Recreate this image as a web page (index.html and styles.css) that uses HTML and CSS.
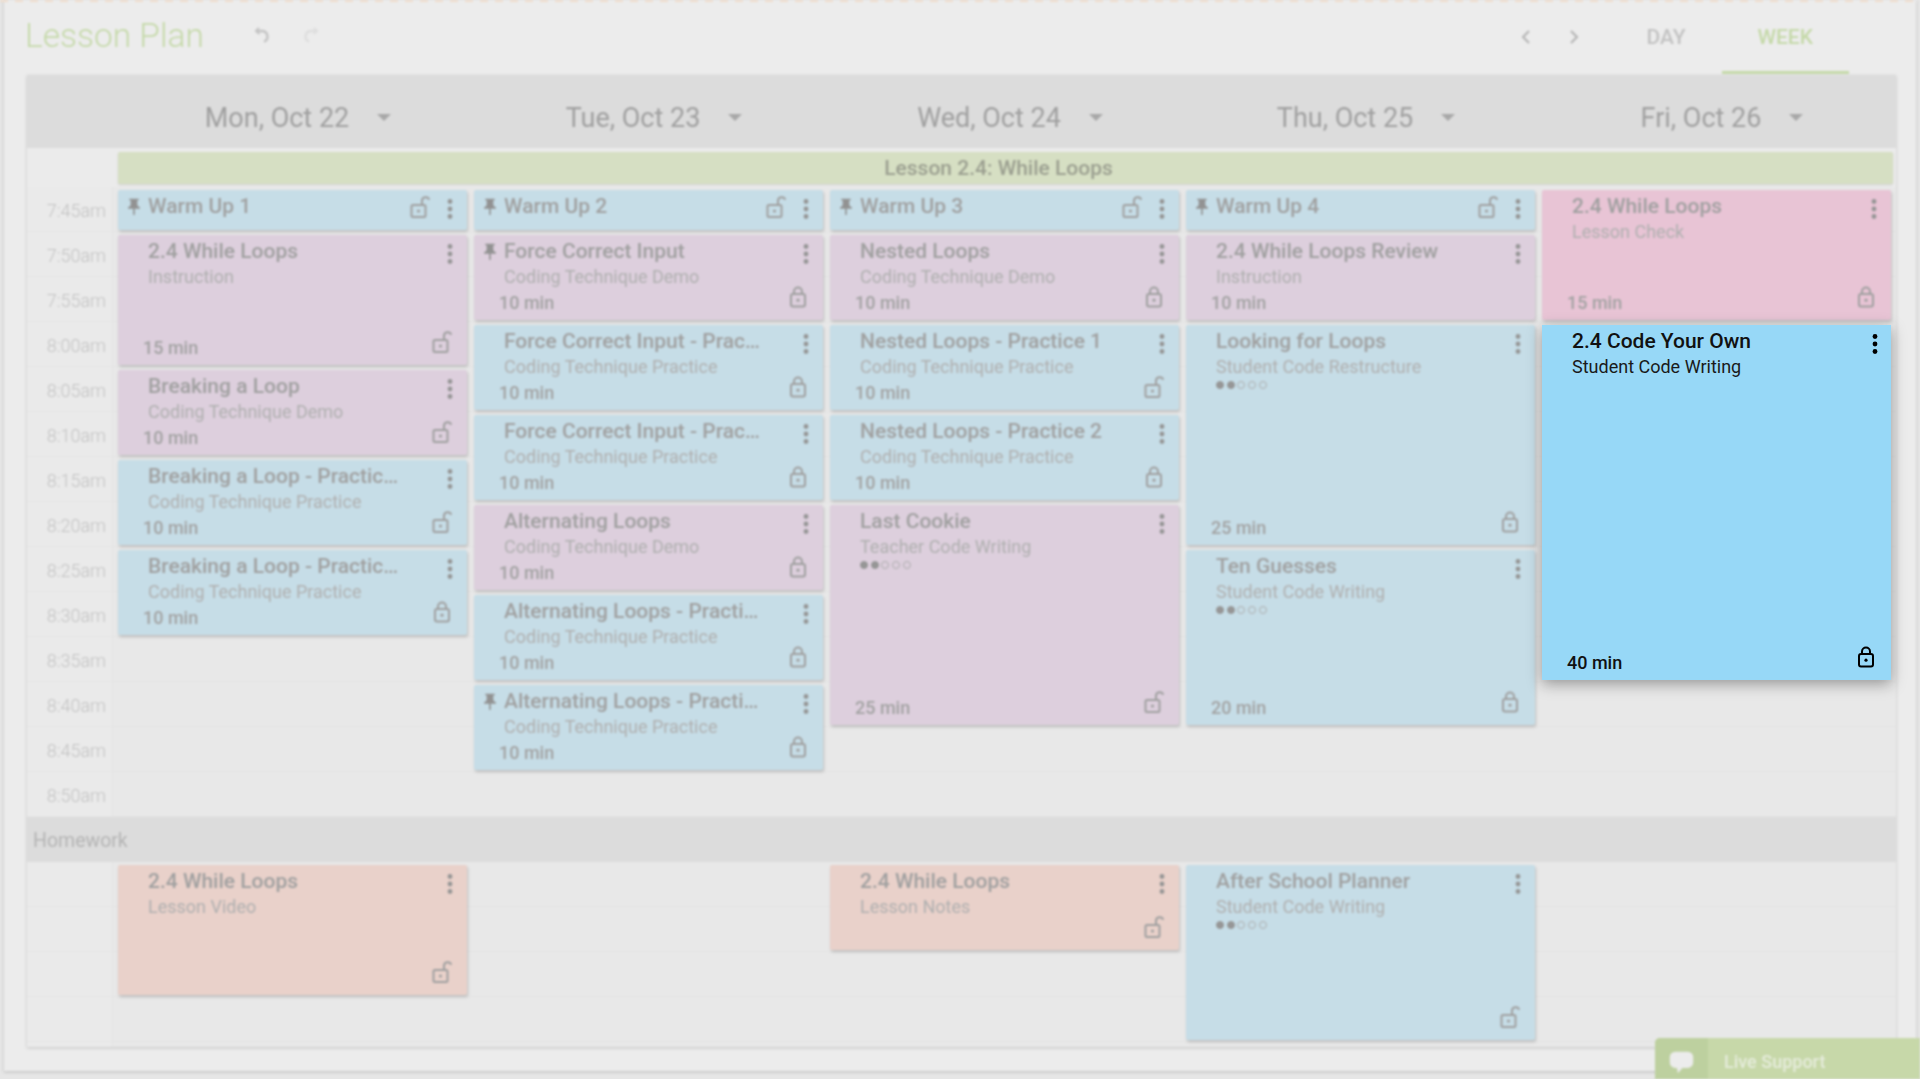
FILE: index.html
```html
<!DOCTYPE html>
<html lang="en">
<head>
  <meta charset="UTF-8">
  <title>Lesson Plan</title>
  <link rel="stylesheet" href="styles.css">
</head>
<body>
  <svg class="sprite" width="0" height="0">
    <symbol id="i-more" viewBox="0 0 24 24"><circle cx="12" cy="4.5" r="2.4"/><circle cx="12" cy="12" r="2.4"/><circle cx="12" cy="19.5" r="2.4"/></symbol>
    <symbol id="i-lock" viewBox="0 0 24 24"><path d="M8 9V6.5a4 4 0 0 1 8 0V9" fill="none" stroke="currentColor" stroke-width="2"/><rect x="5" y="9" width="14" height="12.5" rx="2" fill="none" stroke="currentColor" stroke-width="2"/><circle cx="12" cy="15.2" r="1.6"/></symbol>
    <symbol id="i-open" viewBox="0 0 24 24"><path d="M14 10V6a3.7 3.7 0 0 1 7.2-1.2" fill="none" stroke="currentColor" stroke-width="2"/><rect x="3.5" y="10" width="14" height="12" rx="1.5" fill="none" stroke="currentColor" stroke-width="2"/><circle cx="10.5" cy="16" r="1.6"/></symbol>
    <symbol id="i-pin" viewBox="0 0 24 24"><path d="M16 9V4h1c.55 0 1-.45 1-1s-.45-1-1-1H7c-.55 0-1 .45-1 1s.45 1 1 1h1v5c0 1.66-1.34 3-3 3v2h5.97v7l1 1 1-1v-7H19v-2c-1.66 0-3-1.34-3-3z"/></symbol>
    <symbol id="i-caret" viewBox="0 0 14 7"><path d="M0 0h14L7 7z"/></symbol>
  </svg>

  <div class="backdrop">
    <div class="top-strip"></div>
    <div class="panel">
      <div class="topbar">
        <h1 class="page-title">Lesson Plan</h1>
        <svg class="hist undo" viewBox="0 0 24 24"><path d="M8 5 5 8l3.5 3" fill="none" stroke="currentColor" stroke-width="2"/><path d="M5 8h6a5.5 5.5 0 0 1 2 10.6" fill="none" stroke="currentColor" stroke-width="2.4"/></svg>
        <svg class="hist redo" viewBox="0 0 24 24"><path d="M16 5l3 3-3.5 3" fill="none" stroke="currentColor" stroke-width="2"/><path d="M19 8h-6a5.5 5.5 0 0 0-2 10.6" fill="none" stroke="currentColor" stroke-width="2.4"/></svg>
        <div class="week-nav">
          <svg class="chev" viewBox="0 0 24 24"><path d="M15 6l-6 6 6 6" fill="none" stroke="currentColor" stroke-width="2"/></svg>
          <svg class="chev" viewBox="0 0 24 24"><path d="M9 6l6 6-6 6" fill="none" stroke="currentColor" stroke-width="2"/></svg>
        </div>
        <div class="tabs">
          <div class="tab">DAY</div>
          <div class="tab active">WEEK</div>
        </div>
      </div>

      <div class="planner">
        <div class="day-header">
          <div class="day-spacer"></div>
          <div class="day-name">Mon, Oct 22<svg class="caret"><use href="#i-caret"/></svg></div>
          <div class="day-name">Tue, Oct 23<svg class="caret"><use href="#i-caret"/></svg></div>
          <div class="day-name">Wed, Oct 24<svg class="caret"><use href="#i-caret"/></svg></div>
          <div class="day-name">Thu, Oct 25<svg class="caret"><use href="#i-caret"/></svg></div>
          <div class="day-name">Fri, Oct 26<svg class="caret"><use href="#i-caret"/></svg></div>
        </div>

        <div class="lesson-row">
          <div class="lesson-band">Lesson 2.4: While Loops</div>
        </div>

        <div class="rows schedule">
          <div class="times">
            <div class="time">7:45am</div>
            <div class="time">7:50am</div>
            <div class="time">7:55am</div>
            <div class="time">8:00am</div>
            <div class="time">8:05am</div>
            <div class="time">8:10am</div>
            <div class="time">8:15am</div>
            <div class="time">8:20am</div>
            <div class="time">8:25am</div>
            <div class="time">8:30am</div>
            <div class="time">8:35am</div>
            <div class="time">8:40am</div>
            <div class="time">8:45am</div>
            <div class="time">8:50am</div>
          </div>

          <!-- Monday -->
          <div class="day">
            <div class="card blue span-1">
              <div class="card-head"><svg class="pin"><use href="#i-pin"/></svg><div class="card-title">Warm Up 1</div><svg class="lock-inline"><use href="#i-open"/></svg><svg class="more"><use href="#i-more"/></svg></div>
            </div>
            <div class="card mauve span-3">
              <div class="card-head"><div class="card-title">2.4 While Loops</div><svg class="more"><use href="#i-more"/></svg></div>
              <div class="card-type">Instruction</div>
              <div class="card-foot"><span>15 min</span><svg class="lock"><use href="#i-open"/></svg></div>
            </div>
            <div class="card mauve span-2">
              <div class="card-head"><div class="card-title">Breaking a Loop</div><svg class="more"><use href="#i-more"/></svg></div>
              <div class="card-type">Coding Technique Demo</div>
              <div class="card-foot"><span>10 min</span><svg class="lock"><use href="#i-open"/></svg></div>
            </div>
            <div class="card blue span-2">
              <div class="card-head"><div class="card-title">Breaking a Loop - Practice 1</div><svg class="more"><use href="#i-more"/></svg></div>
              <div class="card-type">Coding Technique Practice</div>
              <div class="card-foot"><span>10 min</span><svg class="lock"><use href="#i-open"/></svg></div>
            </div>
            <div class="card blue span-2">
              <div class="card-head"><div class="card-title">Breaking a Loop - Practice 2</div><svg class="more"><use href="#i-more"/></svg></div>
              <div class="card-type">Coding Technique Practice</div>
              <div class="card-foot"><span>10 min</span><svg class="lock"><use href="#i-lock"/></svg></div>
            </div>
          </div>

          <!-- Tuesday -->
          <div class="day">
            <div class="card blue span-1">
              <div class="card-head"><svg class="pin"><use href="#i-pin"/></svg><div class="card-title">Warm Up 2</div><svg class="lock-inline"><use href="#i-open"/></svg><svg class="more"><use href="#i-more"/></svg></div>
            </div>
            <div class="card mauve span-2">
              <div class="card-head"><svg class="pin"><use href="#i-pin"/></svg><div class="card-title">Force Correct Input</div><svg class="more"><use href="#i-more"/></svg></div>
              <div class="card-type">Coding Technique Demo</div>
              <div class="card-foot"><span>10 min</span><svg class="lock"><use href="#i-lock"/></svg></div>
            </div>
            <div class="card blue span-2">
              <div class="card-head"><div class="card-title">Force Correct Input - Practice 1</div><svg class="more"><use href="#i-more"/></svg></div>
              <div class="card-type">Coding Technique Practice</div>
              <div class="card-foot"><span>10 min</span><svg class="lock"><use href="#i-lock"/></svg></div>
            </div>
            <div class="card blue span-2">
              <div class="card-head"><div class="card-title">Force Correct Input - Practice 2</div><svg class="more"><use href="#i-more"/></svg></div>
              <div class="card-type">Coding Technique Practice</div>
              <div class="card-foot"><span>10 min</span><svg class="lock"><use href="#i-lock"/></svg></div>
            </div>
            <div class="card mauve span-2">
              <div class="card-head"><div class="card-title">Alternating Loops</div><svg class="more"><use href="#i-more"/></svg></div>
              <div class="card-type">Coding Technique Demo</div>
              <div class="card-foot"><span>10 min</span><svg class="lock"><use href="#i-lock"/></svg></div>
            </div>
            <div class="card blue span-2">
              <div class="card-head"><div class="card-title">Alternating Loops - Practice 1</div><svg class="more"><use href="#i-more"/></svg></div>
              <div class="card-type">Coding Technique Practice</div>
              <div class="card-foot"><span>10 min</span><svg class="lock"><use href="#i-lock"/></svg></div>
            </div>
            <div class="card blue span-2">
              <div class="card-head"><svg class="pin"><use href="#i-pin"/></svg><div class="card-title">Alternating Loops - Practice 2</div><svg class="more"><use href="#i-more"/></svg></div>
              <div class="card-type">Coding Technique Practice</div>
              <div class="card-foot"><span>10 min</span><svg class="lock"><use href="#i-lock"/></svg></div>
            </div>
          </div>

          <!-- Wednesday -->
          <div class="day">
            <div class="card blue span-1">
              <div class="card-head"><svg class="pin"><use href="#i-pin"/></svg><div class="card-title">Warm Up 3</div><svg class="lock-inline"><use href="#i-open"/></svg><svg class="more"><use href="#i-more"/></svg></div>
            </div>
            <div class="card mauve span-2">
              <div class="card-head"><div class="card-title">Nested Loops</div><svg class="more"><use href="#i-more"/></svg></div>
              <div class="card-type">Coding Technique Demo</div>
              <div class="card-foot"><span>10 min</span><svg class="lock"><use href="#i-lock"/></svg></div>
            </div>
            <div class="card blue span-2">
              <div class="card-head"><div class="card-title">Nested Loops - Practice 1</div><svg class="more"><use href="#i-more"/></svg></div>
              <div class="card-type">Coding Technique Practice</div>
              <div class="card-foot"><span>10 min</span><svg class="lock"><use href="#i-open"/></svg></div>
            </div>
            <div class="card blue span-2">
              <div class="card-head"><div class="card-title">Nested Loops - Practice 2</div><svg class="more"><use href="#i-more"/></svg></div>
              <div class="card-type">Coding Technique Practice</div>
              <div class="card-foot"><span>10 min</span><svg class="lock"><use href="#i-lock"/></svg></div>
            </div>
            <div class="card mauve span-5">
              <div class="card-head"><div class="card-title">Last Cookie</div><svg class="more"><use href="#i-more"/></svg></div>
              <div class="card-type">Teacher Code Writing</div>
              <div class="dots"><span class="on"></span><span class="on"></span><span></span><span></span><span></span></div>
              <div class="card-foot"><span>25 min</span><svg class="lock"><use href="#i-open"/></svg></div>
            </div>
          </div>

          <!-- Thursday -->
          <div class="day">
            <div class="card blue span-1">
              <div class="card-head"><svg class="pin"><use href="#i-pin"/></svg><div class="card-title">Warm Up 4</div><svg class="lock-inline"><use href="#i-open"/></svg><svg class="more"><use href="#i-more"/></svg></div>
            </div>
            <div class="card mauve span-2">
              <div class="card-head"><div class="card-title">2.4 While Loops Review</div><svg class="more"><use href="#i-more"/></svg></div>
              <div class="card-type">Instruction</div>
              <div class="card-foot"><span>10 min</span></div>
            </div>
            <div class="card blue span-5">
              <div class="card-head"><div class="card-title">Looking for Loops</div><svg class="more"><use href="#i-more"/></svg></div>
              <div class="card-type">Student Code Restructure</div>
              <div class="dots"><span class="on"></span><span class="on"></span><span></span><span></span><span></span></div>
              <div class="card-foot"><span>25 min</span><svg class="lock"><use href="#i-lock"/></svg></div>
            </div>
            <div class="card blue span-4">
              <div class="card-head"><div class="card-title">Ten Guesses</div><svg class="more"><use href="#i-more"/></svg></div>
              <div class="card-type">Student Code Writing</div>
              <div class="dots"><span class="on"></span><span class="on"></span><span></span><span></span><span></span></div>
              <div class="card-foot"><span>20 min</span><svg class="lock"><use href="#i-lock"/></svg></div>
            </div>
          </div>

          <!-- Friday -->
          <div class="day">
            <div class="card pink span-3">
              <div class="card-head"><div class="card-title">2.4 While Loops</div><svg class="more"><use href="#i-more"/></svg></div>
              <div class="card-type">Lesson Check</div>
              <div class="card-foot"><span>15 min</span><svg class="lock"><use href="#i-lock"/></svg></div>
            </div>
          </div>
        </div>

        <div class="section-band">Homework</div>

        <div class="rows homework">
          <div class="times"></div>
          <div class="day">
            <div class="card salmon span-3">
              <div class="card-head"><div class="card-title">2.4 While Loops</div><svg class="more"><use href="#i-more"/></svg></div>
              <div class="card-type">Lesson Video</div>
              <div class="card-foot"><span></span><svg class="lock"><use href="#i-open"/></svg></div>
            </div>
          </div>
          <div class="day"></div>
          <div class="day">
            <div class="card salmon span-2">
              <div class="card-head"><div class="card-title">2.4 While Loops</div><svg class="more"><use href="#i-more"/></svg></div>
              <div class="card-type">Lesson Notes</div>
              <div class="card-foot"><span></span><svg class="lock"><use href="#i-open"/></svg></div>
            </div>
          </div>
          <div class="day">
            <div class="card blue span-4">
              <div class="card-head"><div class="card-title">After School Planner</div><svg class="more"><use href="#i-more"/></svg></div>
              <div class="card-type">Student Code Writing</div>
              <div class="dots"><span class="on"></span><span class="on"></span><span></span><span></span><span></span></div>
              <div class="card-foot"><span></span><svg class="lock"><use href="#i-open"/></svg></div>
            </div>
          </div>
          <div class="day"></div>
        </div>
      </div>
    </div>

    <div class="live-support">
      <div class="live-icon">
        <svg viewBox="0 0 30 30"><path d="M8 3h14a6 6 0 0 1 6 6v6a6 6 0 0 1-6 6h-6l-5 6-1-6H8a6 6 0 0 1-6-6V9a6 6 0 0 1 6-6z"/></svg>
      </div>
      <div class="live-text">Live Support</div>
    </div>
  </div>

  <!-- the card being dragged sits sharp above the blurred page -->
  <div class="card-lifted">
    <div class="card-head"><div class="card-title">2.4 Code Your Own</div><svg class="more"><use href="#i-more"/></svg></div>
    <div class="card-type">Student Code Writing</div>
    <div class="card-foot"><span>40 min</span><svg class="lock"><use href="#i-lock"/></svg></div>
  </div>
</body>
</html>
```

FILE: styles.css
```css
/* General Styles */
* {
  box-sizing: border-box;
}

body {
  margin: 0;
  height: 1079px;
  overflow: hidden;
  position: relative;
  background: #e6e6e6;
  font-family: Roboto, "Liberation Sans", sans-serif;
  color: #9e9e9e;
}

.sprite {
  position: absolute;
}

.backdrop {
  height: 1079px;
  filter: blur(1.3px);
}

.top-strip {
  position: absolute;
  left: 0;
  right: 0;
  top: 0;
  height: 2px;
  z-index: 1;
  background: repeating-linear-gradient(90deg, #f0dccb 0, #f0dccb 8px, transparent 8px, transparent 15px);
}

.panel {
  height: 1071px;
  margin: 0 4px;
  padding: 0 20px 0 23px;
  background: #ececec;
  box-shadow: 0 1px 3px rgba(0, 0, 0, 0.2);
}

/* Top bar */
.topbar {
  display: flex;
  align-items: center;
  height: 75px;
  padding-right: 47px;
}

.page-title {
  margin: 0 47px 5px -2px;
  font-size: 33.5px;
  font-weight: 300;
  color: #c5d9a9;
}

.hist {
  width: 24px;
  height: 24px;
  margin: 0 23px 5px 0;
}

.undo {
  color: #c4c4c4;
}

.redo {
  color: #dedede;
}

.week-nav {
  display: flex;
  gap: 24px;
  margin-left: auto;
  margin-right: 24px;
  margin-bottom: 2px;
}

.chev {
  width: 24px;
  height: 24px;
  color: #b4b4b4;
}

.tabs {
  display: flex;
  height: 74px;
  align-self: flex-start;
}

.tab {
  padding: 0 36px;
  line-height: 74px;
  font-size: 21px;
  font-weight: 500;
  color: #c2c2c2;
}

.tab.active {
  color: #c5d9a9;
  border-bottom: 3px solid #c5d9a9;
}

/* Planner table */
.planner {
  background: #e8e8e8;
  box-shadow: 0 1px 3px rgba(0, 0, 0, 0.18);
}

.day-header {
  display: grid;
  grid-template-columns: 93px repeat(5, 356px);
  height: 73px;
  background: #dcdcdc;
}

.day-name {
  display: flex;
  align-items: center;
  justify-content: center;
  gap: 28px;
  padding-top: 12px;
  font-size: 27px;
  color: #a0a0a0;
}

.caret {
  width: 14px;
  height: 7px;
  fill: #a8a8a8;
}

.lesson-row {
  height: 39px;
  padding: 4px 3px 2px 91px;
  background: #ebebeb;
}

.lesson-band {
  height: 32px;
  padding-right: 14px;
  background: #d6dfc3;
  border-radius: 2px;
  box-shadow: 0 1px 2px rgba(0, 0, 0, 0.12);
  text-align: center;
  line-height: 32px;
  font-size: 21px;
  font-weight: 500;
  color: #9b9f90;
}

.rows {
  display: grid;
  grid-template-columns: 89px repeat(5, 1fr);
  background-image: repeating-linear-gradient(to bottom, transparent 0, transparent 44px, #e3e3e3 44px, #e3e3e3 45px);
}

.schedule {
  height: 630px;
}

.homework {
  height: 185px;
}

.times {
  margin-right: 3px;
  border-right: 1px solid #e4e4e4;
  background-color: rgba(255, 255, 255, 0.1);
}

.time {
  height: 45px;
  line-height: 47px;
  padding-right: 6px;
  text-align: right;
  font-size: 18px;
  font-weight: 300;
  color: #c2c2c2;
}

.section-band {
  height: 45px;
  padding-left: 6px;
  line-height: 47px;
  background: #dcdcdc;
  font-size: 19.5px;
  color: #b4b4b4;
}

.day {
  display: flex;
  flex-direction: column;
  min-width: 0;
}

/* Cards */
.card {
  display: flex;
  flex-direction: column;
  margin: 3px 5px 2px 2px;
  border-radius: 2px;
  box-shadow: 1px 2px 3px rgba(0, 0, 0, 0.18);
}

.span-1 { height: 40px; }
.span-2 { height: 85px; }
.span-3 { height: 130px; }
.span-4 { height: 175px; }
.span-5 { height: 220px; }

.blue { background: #c6dde7; }
.mauve { background: #ddcfdd; }
.pink { background: #e8c4d5; }
.salmon { background: #e9d1ca; }

.card-head {
  display: flex;
  align-items: flex-start;
  height: 28px;
  padding: 4px 5px 0 30px;
  position: relative;
}

.card-title {
  flex: 1;
  min-width: 0;
  margin-right: 32px;
  white-space: nowrap;
  overflow: hidden;
  text-overflow: ellipsis;
  line-height: 24px;
  font-size: 21px;
  font-weight: 500;
  color: #a0a0a0;
}

.pin {
  position: absolute;
  left: 6px;
  top: 7px;
  width: 20px;
  height: 20px;
  fill: #929292;
}

.more {
  flex: none;
  width: 24px;
  height: 24px;
  margin-top: 3px;
  fill: #959595;
}

.lock-inline {
  flex: none;
  width: 24px;
  height: 24px;
  margin: 1px 6px 0 -32px;
  fill: #a0a0a0;
  color: #a0a0a0;
}

.card-type {
  padding: 3px 0 0 30px;
  line-height: 22px;
  font-size: 18px;
  color: #b0b0b0;
}

.dots {
  display: flex;
  gap: 2.7px;
  padding: 3px 0 0 30px;
}

.dots span {
  width: 8px;
  height: 8px;
  border-radius: 50%;
  border: 1px solid #adadad;
}

.dots .on {
  background: #969696;
  border-color: #969696;
}

.card-foot {
  display: flex;
  justify-content: space-between;
  align-items: flex-end;
  margin-top: auto;
  height: 27px;
  padding: 0 13px 7px 25px;
  line-height: 20px;
  font-size: 18px;
  font-weight: 500;
  color: #a2a2a2;
}

.lock {
  flex: none;
  width: 24px;
  height: 24px;
  margin-bottom: 4px;
  fill: #a0a0a0;
  color: #a0a0a0;
}

/* Dragged card */
.card-lifted {
  position: absolute;
  left: 1542px;
  top: 325px;
  width: 349px;
  height: 355px;
  display: flex;
  flex-direction: column;
  background: #97d8f7;
  box-shadow: 0 4px 14px rgba(0, 0, 0, 0.35);
}

.card-lifted .card-head {
  padding-right: 4px;
}

.card-lifted .card-title {
  color: #111;
}

.card-lifted .more {
  fill: #000;
}

.card-lifted .card-type {
  color: #1a1a1a;
}

.card-lifted .card-foot {
  color: #111;
}

.card-lifted .lock {
  fill: #000;
  color: #000;
}

/* Live support tab */
.live-support {
  position: absolute;
  right: 0;
  bottom: 0;
  width: 265px;
  height: 41px;
  display: flex;
  background: #c7d8a9;
  border-top-left-radius: 5px;
}

.live-icon {
  width: 53px;
  padding: 11px 0 0 13px;
  background: #bdd09f;
  border-top-left-radius: 5px;
}

.live-icon svg {
  width: 27px;
  height: 27px;
  fill: #ececec;
}

.live-text {
  padding: 13px 0 0 16px;
  font-size: 18px;
  font-weight: 500;
  color: #e6ecdc;
}
```
